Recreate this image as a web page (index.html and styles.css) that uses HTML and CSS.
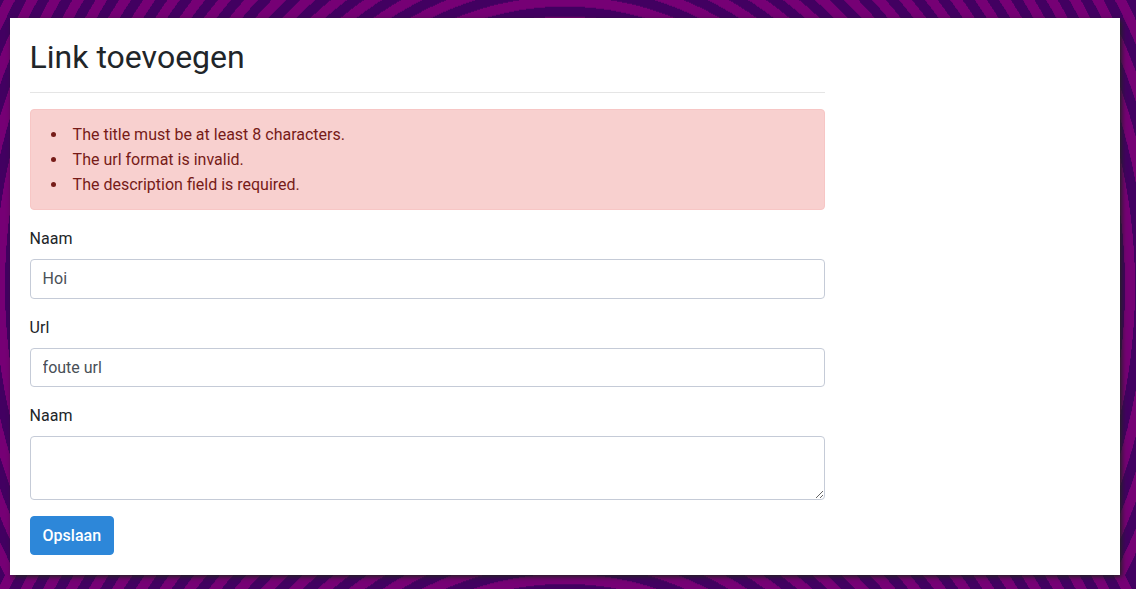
FILE: index.html
```html
<!DOCTYPE html>
<html lang="nl">
<head>
<meta charset="utf-8">
<title>Link toevoegen</title>
<link rel="stylesheet" href="styles.css">
</head>
<body>
<main class="panel">
  <div class="content">
    <h1 class="title">Link toevoegen</h1>
    <hr class="divider">
    <div class="alert">
      <ul class="errors">
        <li>The title must be at least 8 characters.</li>
        <li>The url format is invalid.</li>
        <li>The description field is required.</li>
      </ul>
    </div>
    <form>
      <div class="group">
        <label class="label" for="title">Naam</label>
        <input class="control" id="title" type="text" value="Hoi">
      </div>
      <div class="group">
        <label class="label" for="url">Url</label>
        <input class="control" id="url" type="text" value="foute url">
      </div>
      <div class="group">
        <label class="label" for="description">Naam</label>
        <textarea class="control area" id="description"></textarea>
      </div>
      <button class="button" type="button">Opslaan</button>
    </form>
  </div>
</main>
</body>
</html>
```
FILE: styles.css
```css
* { box-sizing: border-box; }

html {
  height: 100%;
  overflow: hidden;
  background-color: #420061;
  background-image: repeating-radial-gradient(circle at 565px 288.75px, #760075, #760075 10px, #420061 10px, #420061 20px);
  background-size: 1136px 577.5px;
  background-position: 0 -2.25px;
}

body {
  margin: 0;
  padding: 18px 16px 14px 10px;
  font-family: Roboto, sans-serif;
  font-size: 16px;
  line-height: 25px;
  color: #212529;
}

.panel {
  height: 557px;
  padding: 20px 20px 20px 19.6px;
  background: #fff;
  box-shadow: 2px 2px 5px #222;
}

.content { width: 795.4px; }

.title {
  margin: 0;
  font-size: 32px;
  font-weight: 400;
  line-height: 38px;
}

.divider {
  height: 1px;
  margin: 16px 0;
  border: 0;
  background: #e5e5e5;
}

.alert {
  margin-bottom: 16.35px;
  padding: 12px 20px;
  border: 1px solid #f7c6c5;
  border-radius: 4px;
  background: #f8d0cf;
  color: #761b18;
}

.errors {
  margin: 0;
  padding: 0;
  list-style-position: inside;
}

.group { margin-bottom: 16px; }

.label {
  display: block;
  margin-bottom: 8px;
}

.control {
  display: block;
  width: 100%;
  height: 39.2px;
  padding: 6px 12px;
  border: 1px solid #c5cbd7;
  border-radius: 4px;
  background: #fff;
  color: #495057;
  font: inherit;
}

.area {
  height: 64px;
  resize: vertical;
}

.button {
  display: block;
  height: 39px;
  padding: 6px 12px;
  border: 1px solid #2d87d9;
  border-radius: 4px;
  background: #2d87d9;
  color: #fff;
  font: inherit;
  font-weight: 500;
}
```
